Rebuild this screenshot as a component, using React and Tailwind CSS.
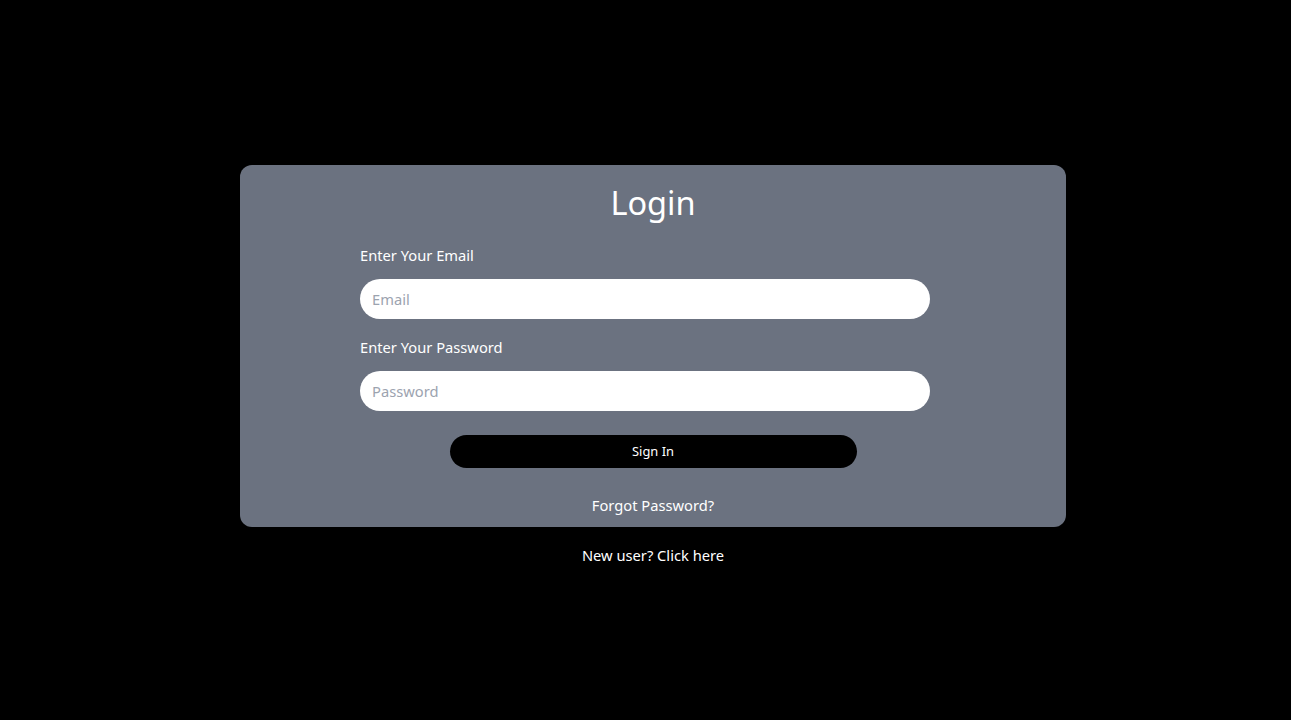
export default function App() {
  return (
    <div className="min-h-screen bg-black text-white flex flex-col items-center pl-[15px] pt-[165px]" style={{ fontFamily: '"Noto Sans", "Open Sans", sans-serif' }}>
      <div className="w-[826px] bg-[#6b7280] rounded-xl pt-[18px] pb-[10px] flex flex-col items-center">
        <h1 className="text-[32.5px] leading-10 text-white">Login</h1>
        <form className="w-[586px] mt-[20px] flex flex-col" onSubmit={(e) => e.preventDefault()}>
          <label className="text-[14.7px] leading-6">Enter Your Email</label>
          <input type="email" placeholder="Email" className="mt-3 w-[570px] h-10 rounded-full bg-white px-3 text-[14.7px] text-black placeholder:text-[#9ca3af] outline-none" />
          <label className="mt-4 text-[14.7px] leading-6">Enter Your Password</label>
          <input type="password" placeholder="Password" className="mt-3 w-[570px] h-10 rounded-full bg-white px-3 text-[14.7px] text-black placeholder:text-[#9ca3af] outline-none" />
          <div className="mt-6 flex justify-center">
            <button type="submit" className="w-[407px] h-[33px] rounded-full bg-black text-white text-[12.9px]">Sign In</button>
          </div>
        </form>
        <a className="mt-[25px] text-[14.7px] leading-6 text-white">Forgot Password?</a>
      </div>
      <a className="mt-4 text-[14.7px] leading-6 text-white">New user? Click here</a>
    </div>
  );
}
